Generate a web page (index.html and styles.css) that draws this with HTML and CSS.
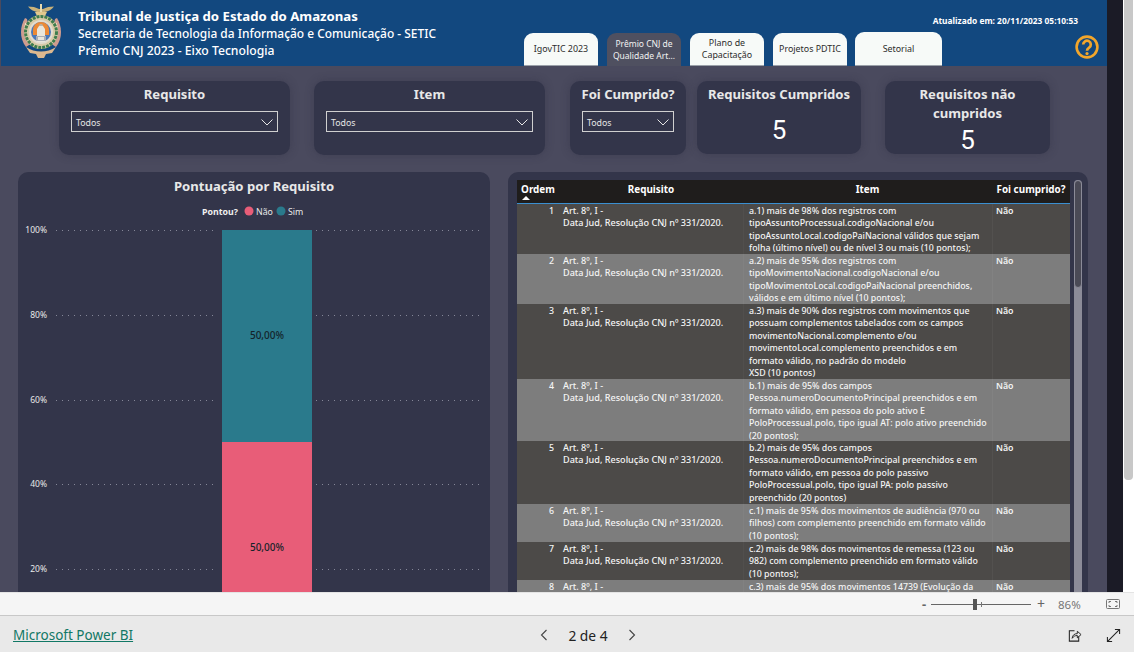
FILE: index.html
```html
<!DOCTYPE html>
<html lang="pt-BR">
<head>
<meta charset="utf-8">
<title>Prêmio CNJ 2023 - Eixo Tecnologia</title>
<link rel="stylesheet" href="styles.css">
</head>
<body>
<div class="viewer">
  <div class="report">
    <main class="canvas">
      <header class="top">
        <svg class="logo" viewBox="0 0 44 56" aria-hidden="true">
          <path d="M9 3.500c4 0 8 .8 11 2.500h4c3-1.700 7-2.500 11-2.500-2 3-6 5-9 5.500h-8c-3-.5-7-2.500-9-5.500z" fill="#c9b27a"/>
          <path d="M21 1h2v12h-2z" fill="#e6d9ae"/>
          <path d="M16 9h12l-2 4h-8z" fill="#e2c98e"/>
          <path d="M6 15c-5 8-6 20 1 29l6-4-5-24z" fill="#cf9c8f"/>
          <path d="M38 15c5 8 6 20-1 29l-6-4 5-24z" fill="#cf9c8f"/>
          <path d="M7 20c-2 6-2 14 2 19" fill="none" stroke="#efe0c8" stroke-width="1.500"/>
          <path d="M37 20c2 6 2 14-2 19" fill="none" stroke="#efe0c8" stroke-width="1.500"/>
          <circle cx="22" cy="29" r="17" fill="#d9cba8"/>
          <circle cx="22" cy="29" r="15.500" fill="none" stroke="#3f7d4d" stroke-width="3" stroke-dasharray="3 1"/>
          <circle cx="22" cy="29" r="12" fill="#e2ddd0"/>
          <circle cx="22" cy="29" r="10" fill="#4b78b8"/>
          <path d="M14 27a8 8 0 0 1 16 0v5H14z" fill="#ec8a36"/>
          <path d="M18 39V26l2-3h4l2 3v13z" fill="#e9e6dc"/>
          <path d="M20 23a2 2 0 1 1 4 0z" fill="#b9b3a8"/>
          <path d="M17 33h10v5H17z" fill="#a9aeb6"/>
          <path d="M19 34h6v3h-6z" fill="#e9e6dc"/>
          <path d="M7 44c9 6 21 6 30 0l-4 6-6 1-2 4h-6l-2-4-6-1z" fill="#dcb88f"/>
        </svg>
        <div class="titles">
          <h1>Tribunal de Justiça do Estado do Amazonas</h1>
          <p class="sub-one">Secretaria de Tecnologia da Informação e Comunicação - SETIC</p>
          <p>Prêmio CNJ 2023 - Eixo Tecnologia</p>
        </div>
        <nav class="tabs">
          <a class="tab">IgovTIC 2023</a>
          <a class="tab tab-active">Prêmio CNJ de Qualidade Art...</a>
          <a class="tab">Plano de Capacitação</a>
          <a class="tab">Projetos PDTIC</a>
          <a class="tab tab-wide">Setorial</a>
        </nav>
        <div class="top-right">
          <div class="updated">Atualizado em: 20/11/2023 05:10:53</div>
          <svg class="help" viewBox="0 0 24 24" aria-hidden="true">
            <circle cx="12" cy="12" r="10.400" fill="none" stroke="#f2a62b" stroke-width="2.600"/>
            <path d="M8.200 9.600a3.800 3.800 0 1 1 5.900 3.100c-1.400.9-2.100 1.500-2.100 3" fill="none" stroke="#f2a62b" stroke-width="2.700"/>
            <circle cx="12" cy="18.600" r="1.600" fill="#f2a62b"/>
          </svg>
        </div>
      </header>

      <section class="filters">
        <div class="card card-wide">
          <h2>Requisito</h2>
          <div class="select"><span>Todos</span><svg viewBox="0 0 12 7"><path d="M.5.500 6 6 11.500.500" fill="none" stroke="#e6e6e6"/></svg></div>
        </div>
        <div class="card card-wide card-item">
          <h2>Item</h2>
          <div class="select"><span>Todos</span><svg viewBox="0 0 12 7"><path d="M.5.500 6 6 11.500.500" fill="none" stroke="#e6e6e6"/></svg></div>
        </div>
        <div class="card card-narrow">
          <h2>Foi Cumprido?</h2>
          <div class="select"><span>Todos</span><svg viewBox="0 0 12 7"><path d="M.5.500 6 6 11.500.500" fill="none" stroke="#e6e6e6"/></svg></div>
        </div>
        <div class="card card-kpi">
          <h2>Requisitos Cumpridos</h2>
          <div class="kpi kpi-one">5</div>
        </div>
        <div class="card card-kpi card-kpi-two">
          <h2>Requisitos não cumpridos</h2>
          <div class="kpi kpi-two">5</div>
        </div>
      </section>

      <section class="content">
        <div class="chart-panel">
          <h2>Pontuação por Requisito</h2>
          <svg class="chart" viewBox="0 0 472 450" role="img">
            <text class="legend-title" x="184" y="43">Pontou?</text>
            <circle cx="231" cy="39" r="4.500" fill="#e85d78"/>
            <text class="legend" x="238" y="43">Não</text>
            <circle cx="263" cy="39" r="4.500" fill="#2a7a8c"/>
            <text class="legend" x="270" y="43">Sim</text>
            <g class="grid">
              <path d="M38 58.500H200M298 58.500H466"/>
              <path d="M38 143.500H200M298 143.500H466"/>
              <path d="M38 228.500H200M298 228.500H466"/>
              <path d="M38 312.500H200M298 312.500H466"/>
              <path d="M38 397.500H200M298 397.500H466"/>
            </g>
            <g class="axis">
              <text x="29" y="61">100%</text>
              <text x="29" y="146">80%</text>
              <text x="29" y="231">60%</text>
              <text x="29" y="315">40%</text>
              <text x="29" y="400">20%</text>
            </g>
            <rect x="204" y="58" width="90" height="212" fill="#2a7a8c"/>
            <rect x="204" y="270" width="90" height="180" fill="#e85d78"/>
            <text class="value" x="249" y="167">50,00%</text>
            <text class="value" x="249" y="379">50,00%</text>
          </svg>
        </div>

        <div class="table-panel">
          <div class="table">
            <div class="row head">
              <div class="c c-num">Ordem<svg class="sort" viewBox="0 0 8 4"><path d="M0 4 4 0l4 4z" fill="#fff"/></svg></div>
              <div class="c c-req">Requisito</div>
              <div class="c c-item">Item</div>
              <div class="c c-foi">Foi cumprido?</div>
            </div>
            <div class="row r-50">
              <div class="c c-num">1</div>
              <div class="c c-req">Art. 8º, I -<br>Data Jud, Resolução CNJ nº 331/2020.</div>
              <div class="c c-item">a.1) mais de 98% dos registros com<br>tipoAssuntoProcessual.codigoNacional e/ou<br>tipoAssuntoLocal.codigoPaiNacional válidos que sejam<br>folha (último nível) ou de nível 3 ou mais (10 pontos);</div>
              <div class="c c-foi">Não</div>
            </div>
            <div class="row r-50 alt">
              <div class="c c-num">2</div>
              <div class="c c-req">Art. 8º, I -<br>Data Jud, Resolução CNJ nº 331/2020.</div>
              <div class="c c-item">a.2) mais de 95% dos registros com<br>tipoMovimentoNacional.codigoNacional e/ou<br>tipoMovimentoLocal.codigoPaiNacional preenchidos,<br>válidos e em último nível (10 pontos);</div>
              <div class="c c-foi">Não</div>
            </div>
            <div class="row r-75">
              <div class="c c-num">3</div>
              <div class="c c-req">Art. 8º, I -<br>Data Jud, Resolução CNJ nº 331/2020.</div>
              <div class="c c-item">a.3) mais de 90% dos registros com movimentos que<br>possuam complementos tabelados com os campos<br>movimentoNacional.complemento e/ou<br>movimentoLocal.complemento preenchidos e em<br>formato válido, no padrão do modelo<br>XSD (10 pontos)</div>
              <div class="c c-foi">Não</div>
            </div>
            <div class="row r-62 alt">
              <div class="c c-num">4</div>
              <div class="c c-req">Art. 8º, I -<br>Data Jud, Resolução CNJ nº 331/2020.</div>
              <div class="c c-item">b.1) mais de 95% dos campos<br>Pessoa.numeroDocumentoPrincipal preenchidos e em<br>formato válido, em pessoa do polo ativo E<br>PoloProcessual.polo, tipo igual AT: polo ativo preenchido<br>(20 pontos);</div>
              <div class="c c-foi">Não</div>
            </div>
            <div class="row r-63">
              <div class="c c-num">5</div>
              <div class="c c-req">Art. 8º, I -<br>Data Jud, Resolução CNJ nº 331/2020.</div>
              <div class="c c-item">b.2) mais de 95% dos campos<br>Pessoa.numeroDocumentoPrincipal preenchidos e em<br>formato válido, em pessoa do polo passivo<br>PoloProcessual.polo, tipo igual PA: polo passivo<br>preenchido (20 pontos)</div>
              <div class="c c-foi">Não</div>
            </div>
            <div class="row r-38 alt">
              <div class="c c-num">6</div>
              <div class="c c-req">Art. 8º, I -<br>Data Jud, Resolução CNJ nº 331/2020.</div>
              <div class="c c-item">c.1) mais de 95% dos movimentos de audiência (970 ou<br>filhos) com complemento preenchido em formato válido<br>(10 pontos);</div>
              <div class="c c-foi">Não</div>
            </div>
            <div class="row r-38">
              <div class="c c-num">7</div>
              <div class="c c-req">Art. 8º, I -<br>Data Jud, Resolução CNJ nº 331/2020.</div>
              <div class="c c-item">c.2) mais de 98% dos movimentos de remessa (123 ou<br>982) com complemento preenchido em formato válido<br>(10 pontos);</div>
              <div class="c c-foi">Não</div>
            </div>
            <div class="row r-last alt">
              <div class="c c-num">8</div>
              <div class="c c-req">Art. 8º, I -</div>
              <div class="c c-item">c.3) mais de 95% dos movimentos 14739 (Evolução da</div>
              <div class="c c-foi">Não</div>
            </div>
          </div>
          <div class="vscroll"><div class="vthumb"></div></div>
        </div>
      </section>
    </main>
    <div class="gutter"></div>
    <div class="page-scroll"><div class="page-thumb"></div></div>
  </div>

  <div class="zoombar">
    <span class="z-minus">-</span>
    <div class="slider"><i class="slider-tick"></i><i class="slider-thumb"></i></div>
    <span class="z-plus">+</span>
    <span class="z-pct">86%</span>
    <svg class="z-fit" viewBox="0 0 14 10" aria-hidden="true">
      <rect x=".5" y=".5" width="13" height="9" rx="1" fill="none" stroke="#777"/>
      <path d="M3 4V2.500h2M9 2.500h2V4M11 6v1.500H9M5 7.500H3V6" fill="none" stroke="#555" stroke-width=".8"/>
    </svg>
  </div>

  <footer class="footer">
    <a class="pbi">Microsoft Power BI</a>
    <div class="pager">
      <svg viewBox="0 0 8 12" aria-hidden="true"><path d="M6.500 1 1.500 6l5 5" fill="none" stroke="#444" stroke-width="1.100"/></svg>
      <span>2 de 4</span>
      <svg viewBox="0 0 8 12" aria-hidden="true"><path d="M1.500 1l5 5-5 5" fill="none" stroke="#444" stroke-width="1.100"/></svg>
    </div>
    <div class="actions">
      <svg viewBox="0 0 16 16" aria-hidden="true">
        <path d="M8 3H2.500v11h10V9" fill="none" stroke="#222" stroke-width="1.100"/>
        <path d="M5.500 11c.3-3.500 2.500-5 5.500-5V3.500L15 7l-4 3.500V8c-2.300 0-4 .8-5.500 3z" fill="none" stroke="#222"/>
      </svg>
      <svg viewBox="0 0 16 16" aria-hidden="true">
        <path d="M9.500 1.500h5v5M14.500 1.500l-13 13M1.500 9.500v5h5" fill="none" stroke="#222" stroke-width="1.100"/>
      </svg>
    </div>
  </footer>
</div>
</body>
</html>
```

FILE: styles.css
```css
* { box-sizing: border-box; }
html, body { margin: 0; height: 100%; overflow: hidden; }
body { font-family: "Noto Sans", "Open Sans", sans-serif; background: #fff; }
h1, h2, p { margin: 0; }

.viewer { display: flex; flex-direction: column; width: 1134px; height: 652px; }

.report { display: flex; height: 592px; overflow: hidden; }
.canvas { width: 1107px; background: #4a4a5e; display: flex; flex-direction: column; border-left: 1px solid #4a4a5e; }
.gutter { width: 16px; background: #1b1b26; }
.page-scroll { width: 11px; background: #fff; padding-left: 1px; }
.page-thumb { width: 9px; height: 480px; background: #c8c8c8; border-radius: 0 0 4px 4px; }

/* header */
.top { display: flex; height: 66px; flex: none; background: #12487f; color: #fff; }
.logo { width: 44px; height: 56px; margin: 3px 0 0 18px; flex: none; }
.titles { flex: none; width: 446px; margin-left: 15px; padding-top: 8px; }
.titles h1 { font-size: 13.200px; line-height: 17px; font-weight: 700; white-space: nowrap; }
.titles p { font-size: 12.200px; line-height: 17px; font-weight: 500; white-space: nowrap; }
.titles .sub-one { font-size: 11.950px; }

.tabs { flex: none; display: flex; gap: 9px; align-items: flex-end; }
.tab { width: 74px; height: 33px; padding: 0 4px; background: #f7faf8; color: #2c2c2c; border-radius: 9px 9px 0 0;
  border-bottom: 1px solid #9aa0a8; display: flex; align-items: center; justify-content: center; text-align: center;
  font-size: 8.900px; line-height: 12px; }
.tab-active { background: #4f5060; color: #f2f2f2; border-bottom: none; font-size: 8.500px; }
.tab-wide { width: 87px; height: 34px; margin-left: -1px; }

.top-right { flex: 1 1 0; min-width: 0; display: flex; flex-direction: column; align-items: flex-end; padding: 15px 8px 0 0; }
.updated { flex: none; font-size: 8.400px; line-height: 11px; font-weight: 700; white-space: nowrap; margin-right: 21px; }
.help { width: 24px; height: 24px; margin-top: 9px; }

/* filters */
.filters { display: flex; flex: none; padding: 15px 0 0 58px; height: 89px; }
.card { height: 74px; background: #33354a; border-radius: 10px; box-shadow: 0 0 8px rgba(40, 40, 60, .35); color: #e8e8e8; text-align: center; }
.card h2 { font-size: 13.100px; line-height: 19px; font-weight: 700; padding-top: 4px; height: 23px; box-sizing: content-box; }
.card-wide { width: 231px; padding: 0 12px; }
.card-item { margin-left: 24px; }
.card-narrow { width: 116px; margin-left: 25px; padding: 0 12px; }
.card-narrow h2 { margin: 0 -8px; white-space: nowrap; }
.card-kpi { width: 164px; margin-left: 11px; height: 73px; }
.card-kpi-two { width: 165px; margin-left: 24px; }
.card-kpi-two h2 { height: auto; padding: 4px 20px 0; }
.select { height: 21px; margin-top: 3px; padding: 2px 4px 0; border: 1px solid #d0d0d0; display: flex; align-items: center; justify-content: space-between; text-align: left; font-size: 8.800px; color: #e6e6e6; }
.select svg { width: 12px; height: 7px; }
.kpi { font-family: "Roboto", sans-serif; font-size: 26px; line-height: 30px; color: #fff; }
.kpi-one { margin-top: 7px; }
.kpi-two { margin-top: 2px; }

/* content */
.content { display: flex; flex: 1; min-height: 0; padding: 17px 0 0 17px; gap: 18px; overflow: hidden; }
.chart-panel { width: 472px; background: #33354a; border-radius: 10px 10px 0 0; flex: none; overflow: hidden; }
.chart-panel h2 { font-size: 13.100px; line-height: 18px; font-weight: 700; color: #e8e8e8; text-align: center; padding-top: 5px; height: 23px; }
.chart { display: block; width: 472px; height: 450px; margin-top: -23px; }
.legend-title { font-size: 8.800px; font-weight: 700; fill: #f0f0f0; }
.legend { font-size: 8.800px; fill: #e8e8e8; }
.grid path { stroke: #858798; stroke-width: 1; stroke-dasharray: 1 5; fill: none; }
.axis text { font-size: 8.500px; fill: #e8e8e8; text-anchor: end; }
.value { font-size: 10px; font-weight: 500; fill: #14232a; text-anchor: middle; }

.table-panel { width: 580px; background: #33354a; border-radius: 10px 10px 0 0; flex: none; display: flex; padding: 8px 0 0 9px; overflow: hidden; }
.table { width: 553px; flex: none; font-size: 8.800px; line-height: 12.450px; color: #f4f4f4; font-weight: 500; }
.row { display: grid; grid-template-columns: 42px 184px 249px 78px; background: #4c4a48; overflow: hidden; }
.alt { background: #7d7d7d; }
.r-50 { height: 50px; } .r-75 { height: 75px; } .r-62 { height: 62px; } .r-63 { height: 63px; } .r-38 { height: 38px; }
.r-last { height: 14px; }
.c { padding: 1px 0 0 4px; white-space: nowrap; }
.c-num { text-align: right; padding: 1px 5px 0 0; }
.c-req { font-size: 9.100px; padding-left: 4px; }
.c-item { padding-left: 5px; border-left: 1px solid rgba(255, 255, 255, .03); }
.c-foi { border-left: 1px solid rgba(255, 255, 255, .04); padding-left: 3px; font-weight: 600; }
.head { height: 24px; background: #1f1d1c; border-bottom: 1px solid #3a8fd0; font-weight: 700; line-height: 14px; color: #fff; }
.head .c { text-align: center; padding: 2px 0 0; border: none; font-size: 9.900px; font-weight: 700; }
.sort { display: block; width: 8px; height: 4px; margin: 0 auto 0 5px; }

.vscroll { width: 8px; margin-left: 4px; height: 430px; background: #8b8b98; border-radius: 4px 4px 0 0; flex: none; }
.vthumb { height: 108px; background: #4a4a56; border: 1px solid #8b8b98; border-radius: 4px; }

/* zoom bar */
.zoombar { height: 23px; flex: none; background: #f5f5f5; border-top: 1px solid #e4e4e4; display: flex; align-items: center; padding-left: 922px; color: #666; }
.z-minus { width: 9px; font-size: 13px; font-weight: 700; line-height: 14px; }
.slider { width: 100px; height: 1px; background: #666; position: relative; }
.slider-thumb { position: absolute; left: 42px; top: -5px; width: 4px; height: 11px; background: #555; }
.slider-tick { position: absolute; left: 50px; top: -2px; width: 1px; height: 5px; background: #777; }
.z-plus { width: 27px; padding-left: 6px; font-size: 14px; line-height: 14px; }
.z-pct { width: 48px; font-size: 11.500px; color: #777; }
.z-fit { width: 14px; height: 10px; }

/* footer */
.footer { flex: 1; background: #e9e9e9; border-top: 1px solid #c8c8c8; display: grid; grid-template-columns: 1fr auto 1fr; align-items: center; padding: 2px 13px 0; }
.pbi { font-size: 13.500px; color: #117865; text-decoration: underline; }
.pager { display: flex; align-items: center; gap: 20px; font-size: 13.800px; color: #222; margin-left: 42px; }
.pager svg { width: 8px; height: 12px; }
.actions { display: flex; justify-content: flex-end; gap: 24px; }
.actions svg { width: 15px; height: 15px; }
```
